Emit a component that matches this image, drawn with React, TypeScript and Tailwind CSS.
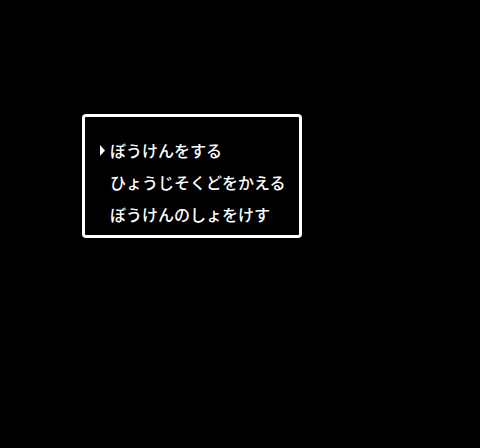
const items = ["ぼうけんをする", "ひょうじそくどをかえる", "ぼうけんのしょをけす"];

export default function App() {
  const selected = 0;
  return (
    <div className="w-[480px] h-[448px] bg-black pt-[114px] pl-[82px]">
      <div className="w-[220px] h-[124px] border-[3px] border-white rounded-[4px] pt-[17px] pl-[15px] text-white text-[16px] leading-[32px] font-medium font-['Noto_Sans_CJK_JP',sans-serif]">
        {items.map((item, i) => (
          <div key={item} className="flex items-center h-[32px]">
            <div className="w-[10px] flex items-center">
              {i === selected && (
                <svg width="6" height="11" viewBox="0 0 6 11">
                  <polygon points="0,0 5,5.5 0,11" fill="white" />
                </svg>
              )}
            </div>
            <span className="whitespace-nowrap">{item}</span>
          </div>
        ))}
      </div>
    </div>
  );
}
